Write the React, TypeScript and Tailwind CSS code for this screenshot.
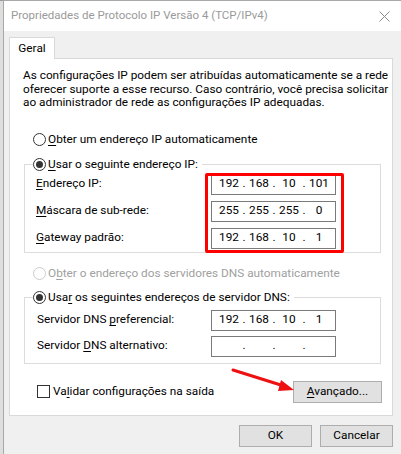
import React from "react";

const U = ({ children }: { children: React.ReactNode }) => (
  <span className="underline underline-offset-[2px] decoration-[1px]">{children}</span>
);

const Radio = ({
  checked,
  disabled,
  children,
}: {
  checked?: boolean;
  disabled?: boolean;
  children: React.ReactNode;
}) => (
  <div className={`flex h-[16px] items-center gap-[2px] ${disabled ? "text-[#a0a0a0]" : "text-black"}`}>
    <span
      className={`flex h-[13px] w-[13px] items-center justify-center rounded-full border bg-white ${
        disabled ? "border-[#cccccc]" : "border-[#333333]"
      }`}
    >
      {checked && <span className="h-[7px] w-[7px] rounded-full bg-[#333333]" />}
    </span>
    <span>{children}</span>
  </div>
);

const IpBox = ({ parts }: { parts: string[] }) => (
  <div className="flex h-[21px] w-[125px] items-center border border-[#7a7a7a] bg-white pl-[4px]">
    {parts.map((p, i) => (
      <React.Fragment key={i}>
        <span className="w-[26px] text-center">{p}</span>
        {i < 3 && <span className="w-[4px] text-center">.</span>}
      </React.Fragment>
    ))}
  </div>
);

const Row = ({ label, parts }: { label: React.ReactNode; parts: string[] }) => (
  <div className="flex items-center pl-[11px]">
    <span className="w-[175px]">{label}</span>
    <IpBox parts={parts} />
  </div>
);

const Button = ({ children, width }: { children: React.ReactNode; width: string }) => (
  <button className={`h-[22px] ${width} border border-[#adadad] bg-[#e1e1e1] text-black`}>{children}</button>
);

export default function App() {
  return (
    <div className="relative flex h-[454px] w-[401px] bg-[#e6e6e6] font-['Roboto',sans-serif] text-[11.8px] leading-[13.5px] text-black">
      <div className="w-[3px] border-t border-[#9a9a9a] bg-[#dedede]" />
      <div className="flex flex-1 flex-col border-l border-t border-[#a8a8a8] bg-[#f0f0f0]">
        {/* title bar */}
        <div className="flex h-[30px] items-center justify-between bg-white pl-[7px] pr-[10px]">
          <span className="text-[11.5px] text-[#9a9a9a]">Propriedades de Protocolo IP Versão 4 (TCP/IPv4)</span>
          <svg width="11" height="11" viewBox="0 0 11 11" className="mr-[1px]">
            <path d="M0.5 0.5 L10.5 10.5 M10.5 0.5 L0.5 10.5" stroke="#8a8a8a" strokeWidth="1" />
          </svg>
        </div>

        {/* body */}
        <div className="flex flex-1 flex-col pl-[5px] pr-[8px] pt-[6px]">
          <div className="relative z-10 -mb-px flex h-[22px] w-[46px] items-center justify-center border border-b-0 border-[#d9d9d9] bg-white">
            Geral
          </div>
          <div className="flex w-[384px] flex-col border border-[#d9d9d9] bg-white pb-[12px] pt-[10px]">
            <p className="pl-[13px]">
              As configurações IP podem ser atribuídas automaticamente se a rede
              <br />
              oferecer suporte a esse recurso. Caso contrário, você precisa solicitar
              <br />
              ao administrador de rede as configurações IP adequadas.
            </p>

            <div className="ml-[23px] mt-[22px]">
              <Radio>
                <U>O</U>bter um endereço IP automaticamente
              </Radio>
            </div>

            <fieldset className="ml-[14px] mt-[9px] w-[357px] border border-[#dcdcdc] pb-[3px]">
              <legend className="ml-[8px] pr-[4px]">
                <Radio checked>
                  <U>U</U>sar o seguinte endereço IP:
                </Radio>
              </legend>
              <div className="mt-[1px] flex flex-col gap-[6px]">
                <Row label={<><U>E</U>ndereço IP:</>} parts={["192", "168", "10", "101"]} />
                <Row label={<><U>M</U>áscara de sub-rede:</>} parts={["255", "255", "255", "0"]} />
                <Row label={<><U>G</U>ateway padrão:</>} parts={["192", "168", "10", "1"]} />
              </div>
            </fieldset>

            <div className="ml-[23px] mt-[13px]">
              <Radio disabled>
                O<U>b</U>ter o endereço dos servidores DNS automaticamente
              </Radio>
            </div>

            <fieldset className="ml-[14px] mt-[8px] w-[357px] border border-[#dcdcdc] pb-[6px]">
              <legend className="ml-[8px] pr-[4px]">
                <Radio checked>
                  Usa<U>r</U> os seguintes endereços de servidor DNS:
                </Radio>
              </legend>
              <div className="mt-[4px] flex flex-col gap-[5px] pl-[12px]">
                <div className="flex items-center">
                  <span className="w-[174px]">
                    Servidor DNS <U>p</U>referencial:
                  </span>
                  <IpBox parts={["192", "168", "10", "1"]} />
                </div>
                <div className="flex items-center">
                  <span className="w-[174px]">
                    Servidor <U>D</U>NS alternativo:
                  </span>
                  <IpBox parts={["", "", "", ""]} />
                </div>
              </div>
            </fieldset>

            <div className="mt-[17px] flex items-center justify-between pl-[27px] pr-[10px]">
              <div className="flex items-center gap-[3px]">
                <span className="h-[13px] w-[13px] border border-[#333333] bg-white" />
                <span>
                  Va<U>l</U>idar configurações na saída
                </span>
              </div>
              <Button width="w-[89px]">
                <U>A</U>vançado...
              </Button>
            </div>
          </div>

          <div className="mt-[9px] flex justify-end gap-[8px]">
            <Button width="w-[73px]">OK</Button>
            <Button width="w-[73px]">Cancelar</Button>
          </div>
        </div>
      </div>

      {/* annotations */}
      <div className="pointer-events-none absolute left-[205px] top-[173px] h-[80px] w-[139px] rounded-[2px] border-[3px] border-[#ff0000]" />
      <svg className="pointer-events-none absolute left-0 top-0" width="401" height="454">
        <line x1="233" y1="370" x2="284" y2="386" stroke="#ee1111" strokeWidth="3" strokeLinecap="round" />
        <polygon points="294,390 281,380 278,391" fill="#ee1111" />
      </svg>
    </div>
  );
}
